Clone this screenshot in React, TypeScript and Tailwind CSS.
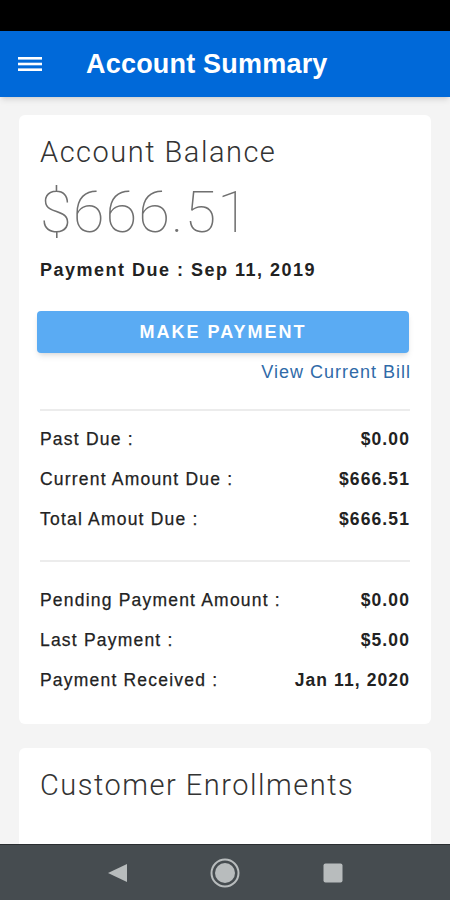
import React from "react";

const rowsA = [
  { label: "Past Due :", value: "$0.00" },
  { label: "Current Amount Due :", value: "$666.51" },
  { label: "Total Amout Due :", value: "$666.51" },
];

const rowsB = [
  { label: "Pending Payment Amount :", value: "$0.00" },
  { label: "Last Payment :", value: "$5.00" },
  { label: "Payment Received :", value: "Jan 11, 2020" },
];

function Row({ label, value }: { label: string; value: string }) {
  return (
    <div className="flex items-center justify-between h-10 text-[17.5px] text-[#222]">
      <span className="tracking-[1.2px] [-webkit-text-stroke:0.25px_#222]">{label}</span>
      <span className="font-bold tracking-[1.1px]">{value}</span>
    </div>
  );
}

export default function App() {
  return (
    <div
      className="w-[450px] h-[900px] flex flex-col bg-[#f4f4f4] overflow-hidden"
      style={{ fontFamily: '"Liberation Sans", Arial, sans-serif' }}
    >
      {/* status bar */}
      <div className="h-[31px] bg-black shrink-0" />

      {/* app bar */}
      <div className="h-[66px] shrink-0 bg-[#0069d9] flex items-center shadow-md">
        <div className="w-[86px] pl-[18px]">
          <svg width="24" height="16" viewBox="0 0 24 16">
            <rect x="0" y="1" width="24" height="2.6" fill="#fff" />
            <rect x="0" y="6.7" width="24" height="2.6" fill="#fff" />
            <rect x="0" y="12.4" width="24" height="2.6" fill="#fff" />
          </svg>
        </div>
        <h1 className="text-white font-bold text-[27px] tracking-[0.2px]">Account Summary</h1>
      </div>

      <div className="flex-1 overflow-hidden px-[19px] pt-[18px] flex flex-col gap-6">
        {/* balance card */}
        <div className="bg-white rounded-md px-[21px] pt-[19px] pb-[24px] shrink-0">
          <div
            className="text-[29px] text-[#333] font-light leading-[36px] tracking-[1.5px]"
            style={{ fontFamily: "Roboto, sans-serif" }}
          >
            Account Balance
          </div>
          <div
            className="text-[58px] text-[#707070] font-thin leading-[68px] mt-[8px] tracking-[1px]"
            style={{ fontFamily: "Roboto, sans-serif" }}
          >
            $666.51
          </div>
          <div className="text-[18px] leading-[24px] font-bold text-[#222] mt-[12px] tracking-[1.5px]">
            Payment Due : Sep 11, 2019
          </div>

          <button className="mt-[29px] -ml-[3px] w-[372px] h-[42px] rounded bg-[#5aabf3] shadow-md text-white font-bold text-[18px] tracking-[2px]">
            MAKE PAYMENT
          </button>
          <div className="text-right text-[18px] leading-[24px] text-[#2f6aa8] mt-[7px] -mr-[1px] tracking-[1px]">
            View Current Bill
          </div>

          <div className="h-[2px] bg-[#ececec] mt-[25px]" />
          <div className="pt-[8px]">
            {rowsA.map((r) => (
              <Row key={r.label} {...r} />
            ))}
          </div>
          <div className="h-[2px] bg-[#ececec] mt-[21px]" />
          <div className="pt-[18px]">
            {rowsB.map((r) => (
              <Row key={r.label} {...r} />
            ))}
          </div>
        </div>

        {/* enrollments card */}
        <div className="bg-white rounded-md pl-[21px] pt-[19px] h-[120px] shrink-0">
          <div
            className="text-[29px] text-[#333] font-light leading-[36px] tracking-[1.5px]"
            style={{ fontFamily: "Roboto, sans-serif" }}
          >
            Customer Enrollments
          </div>
        </div>
      </div>

      {/* nav bar */}
      <div className="h-[56px] shrink-0 bg-[#464c50] border-t border-[#2a2e31] flex items-center justify-center gap-[68px]">
        <div className="w-10 flex justify-center">
          <svg width="21" height="20" viewBox="0 0 21 20">
            <path d="M20 1 L1 10 L20 19 Z" fill="#b8bcbd" />
          </svg>
        </div>
        <div className="w-10 flex justify-center">
          <svg width="30" height="30" viewBox="0 0 30 30">
            <circle cx="15" cy="15" r="13.5" fill="none" stroke="#b8bcbd" strokeWidth="2" />
            <circle cx="15" cy="15" r="10" fill="#b8bcbd" />
          </svg>
        </div>
        <div className="w-10 flex justify-center">
          <svg width="20" height="20" viewBox="0 0 20 20">
            <rect x="0.5" y="0.5" width="19" height="19" rx="2" fill="#b8bcbd" />
          </svg>
        </div>
      </div>
    </div>
  );
}
